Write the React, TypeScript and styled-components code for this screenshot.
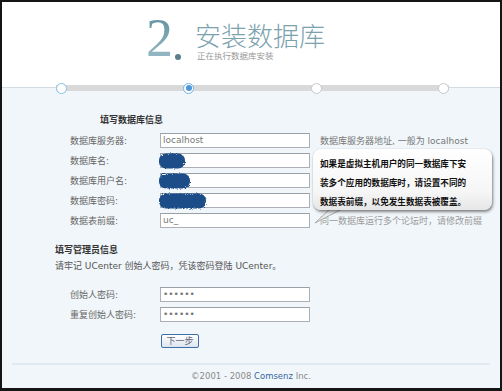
import React from 'react'
import styled, { createGlobalStyle } from 'styled-components'

const GlobalStyle = createGlobalStyle`
  body {
    margin: 0;
    font-family: "DejaVu Sans", "Noto Sans CJK SC", sans-serif;
    font-size: 9px;
    color: #555;
  }
`

const Frame = styled.div`
  width: 502px;
  height: 391px;
  box-sizing: border-box;
  border: 2px solid #151515;
  border-bottom-width: 3px;
  display: flex;
  flex-direction: column;
  background: #fff;
`

const Header = styled.div`
  height: 80px;
  box-sizing: border-box;
  padding: 9px 0 0 144px;
  display: flex;
  align-items: flex-start;
`

const BigNumber = styled.span`
  font-family: "Liberation Serif", serif;
  font-size: 54px;
  line-height: 54px;
  background: linear-gradient(to bottom, #5c8d9c, #9fc0ca);
  -webkit-background-clip: text;
  background-clip: text;
  color: transparent;
`

const NumberDot = styled.span`
  width: 6px;
  height: 6px;
  border-radius: 50%;
  background: #5b7e8e;
  margin: 43px 0 0 2px;
`

const TitleBlock = styled.div`
  padding: 9px 0 0 14px;
  display: flex;
  flex-direction: column;
`

const Title = styled.div`
  font-family: "Noto Sans CJK SC", sans-serif;
  font-weight: 300;
  font-size: 26px;
  line-height: 30px;
  color: #7ca2ae;
`

const Subtitle = styled.div`
  font-family: "Noto Sans CJK SC", sans-serif;
  font-size: 8.5px;
  line-height: 11px;
  margin: 0 0 0 2px;
  color: #999;
`

const StepBar = styled.div`
  height: 12px;
  padding-left: 54px;
  display: flex;
  background: linear-gradient(to bottom, #fff 0 5.5px, #d3dbe0 5.5px 6.5px, #f1f6fa 6.5px);
`

const Track = styled.div`
  width: 393px;
  display: flex;
  justify-content: space-between;
  align-items: center;
  background: linear-gradient(to bottom, transparent 3px, #d9d9d9 3px 9px, transparent 9px);
`

const StepDot = styled.span<{ $state: 'done' | 'active' | 'todo' }>`
  width: 11px;
  height: 11px;
  box-sizing: border-box;
  border-radius: 50%;
  background: #fff;
  border: 1.5px solid
    ${({ $state }) => ($state === 'done' ? '#84c0e3' : $state === 'active' ? '#74b2e2' : '#c9c9c9')};
  display: flex;
  align-items: center;
  justify-content: center;

  &::after {
    content: '';
    width: 6px;
    height: 6px;
    border-radius: 50%;
    background: ${({ $state }) => ($state === 'active' ? '#4b96dc' : 'transparent')};
  }
`

const Body = styled.div`
  position: relative;
  flex: 1;
  background: #f1f6fa;
  padding: 16px 0 0 53px;
  display: flex;
  flex-direction: column;
`

const SectionTitle = styled.div<{ $indent?: number }>`
  font-weight: bold;
  color: #333;
  line-height: ${({ $indent }) => ($indent ? '20px' : '16px')};
  margin-left: ${({ $indent }) => $indent || 0}px;
  margin-top: ${({ $indent }) => ($indent ? 0 : 12)}px;
`

const Note = styled.div`
  line-height: 16px;
  color: #555;
`

const FormGrid = styled.div<{ $top?: number }>`
  display: grid;
  grid-template-columns: 80px 150px auto;
  grid-auto-rows: 20px;
  column-gap: 10px;
  align-items: center;
  margin: ${({ $top }) => $top || 0}px 0 0 15px;
`

const Label = styled.span`
  color: #666;
`

const InputCell = styled.div`
  position: relative;
  height: 15px;
`

const TextInput = styled.input`
  width: 150px;
  height: 15px;
  box-sizing: border-box;
  margin: 0;
  padding: 0 2px;
  border: 1px solid #aab0b6;
  border-top-color: #9aa0a6;
  background: #fff;
  font-family: "DejaVu Sans", sans-serif;
  font-size: 9px;
  color: #777;
  outline: none;
`

const Hint = styled.span<{ $light?: boolean }>`
  color: ${({ $light }) => ($light ? '#9a9a9a' : '#777')};
  white-space: nowrap;
`

const Scribble = styled.svg`
  position: absolute;
  left: -3px;
  top: -1px;
`

const SubmitButton = styled.button`
  width: 38px;
  height: 14px;
  margin: 10px 0 0 106px;
  padding: 0;
  border: 1px solid #3f6ea8;
  border-radius: 2px;
  background: linear-gradient(to bottom, #fff, #dce5ee);
  font-family: "Noto Sans CJK SC", sans-serif;
  font-size: 9px;
  line-height: 12px;
  color: #667;
`

const Footer = styled.div`
  margin: auto 10px 0 -43px;
  height: 25px;
  box-sizing: border-box;
  border-top: 2px solid #e1eaf2;
  padding-top: 1px;
  text-align: center;
  line-height: 21px;
  font-size: 8.5px;
  color: #8a8a8a;
`

const FooterLink = styled.span`
  color: #36689f;
`

const Bubble = styled.div`
  position: absolute;
  left: 311px;
  top: 55px;
  width: 179px;
  height: 61px;
  box-sizing: border-box;
  padding: 4.5px 0 0 7px;
  border-radius: 8px;
  background: linear-gradient(to bottom, #fff 0%, #f6f6f6 70%, #e6e6e6 100%);
  box-shadow: 1px 2px 3px rgba(0, 0, 0, 0.45), 0 0 1px rgba(0, 0, 0, 0.3);
  font-family: "Noto Sans CJK SC", sans-serif;
  font-weight: bold;
  font-size: 8.6px;
  line-height: 19px;
  color: #111;
  white-space: nowrap;
`

const BubbleTail = styled.svg`
  position: absolute;
  left: 308px;
  top: 113px;
`

const blobs: Record<string, number> = { name: 26, user: 31, pass: 47 }

function Blob({ id, width }: { id: string; width: number }) {
  return (
    <Scribble width={width + 4} height={18}>
      <defs>
        <filter id={`rough-${id}`} x="-10%" y="-20%" width="120%" height="140%">
          <feTurbulence type="fractalNoise" baseFrequency="0.8" numOctaves="2" seed={width} result="n" />
          <feDisplacementMap in="SourceGraphic" in2="n" scale="3" />
        </filter>
      </defs>
      <rect x={2} y={1.5} width={width} height={15} rx={7} fill="#1c4d88" filter={`url(#rough-${id})`} />
    </Scribble>
  )
}

const App = () => {
  return (
    <Frame>
      <GlobalStyle />
      <Header>
        <BigNumber>2</BigNumber>
        <NumberDot />
        <TitleBlock>
          <Title>安装数据库</Title>
          <Subtitle>正在执行数据库安装</Subtitle>
        </TitleBlock>
      </Header>
      <StepBar>
        <Track>
          <StepDot $state="done" />
          <StepDot $state="active" />
          <StepDot $state="todo" />
          <StepDot $state="todo" />
        </Track>
      </StepBar>
      <Body>
        <SectionTitle $indent={45}>填写数据库信息</SectionTitle>
        <FormGrid>
          <Label>数据库服务器:</Label>
          <InputCell>
            <TextInput readOnly defaultValue="localhost" />
          </InputCell>
          <Hint>数据库服务器地址, 一般为 localhost</Hint>

          <Label>数据库名:</Label>
          <InputCell>
            <TextInput readOnly defaultValue="" />
            <Blob id="name" width={blobs.name} />
          </InputCell>
          <span />

          <Label>数据库用户名:</Label>
          <InputCell>
            <TextInput readOnly defaultValue="" />
            <Blob id="user" width={blobs.user} />
          </InputCell>
          <span />

          <Label>数据库密码:</Label>
          <InputCell>
            <TextInput readOnly defaultValue="" />
            <Blob id="pass" width={blobs.pass} />
          </InputCell>
          <span />

          <Label>数据表前缀:</Label>
          <InputCell>
            <TextInput readOnly defaultValue="uc_" />
          </InputCell>
          <Hint $light>同一数据库运行多个论坛时，请修改前缀</Hint>
        </FormGrid>

        <SectionTitle>填写管理员信息</SectionTitle>
        <Note>请牢记 UCenter 创始人密码，凭该密码登陆 UCenter。</Note>

        <FormGrid $top={10}>
          <Label>创始人密码:</Label>
          <InputCell>
            <TextInput type="password" readOnly defaultValue="123456" />
          </InputCell>
          <span />

          <Label>重复创始人密码:</Label>
          <InputCell>
            <TextInput type="password" readOnly defaultValue="123456" />
          </InputCell>
          <span />
        </FormGrid>

        <div>
          <SubmitButton>下一步</SubmitButton>
        </div>

        <Footer>
          ©2001 - 2008 <FooterLink>Comsenz</FooterLink> Inc.
        </Footer>

        <BubbleTail width={40} height={20}>
          <polygon points="22,0 36,0 5,16" fill="#ececec" stroke="#9a9a9a" strokeWidth="0.8" />
        </BubbleTail>
        <Bubble>
          <div>如果是虚拟主机用户的同一数据库下安</div>
          <div>装多个应用的数据库时，请设置不同的</div>
          <div>数据表前缀，以免发生数据表被覆盖。</div>
        </Bubble>
      </Body>
    </Frame>
  )
}

export default App
